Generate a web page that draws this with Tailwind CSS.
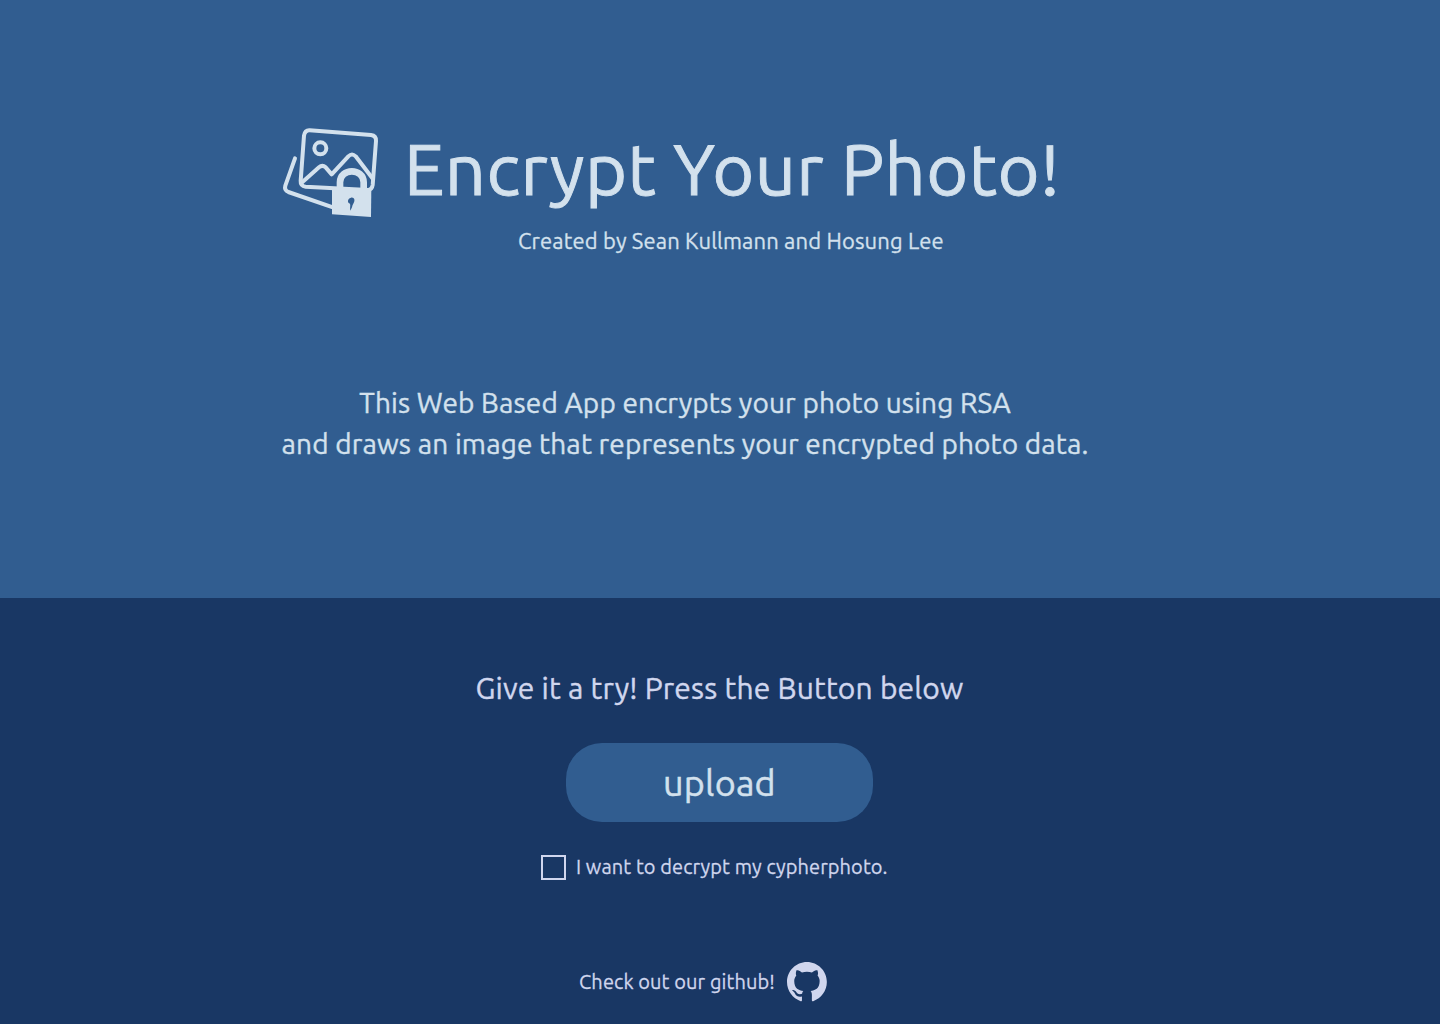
<!DOCTYPE html>
<html lang="en">
<head>
<meta charset="utf-8">
<title>Encrypt Your Photo!</title>
<script src="https://cdn.jsdelivr.net/npm/@tailwindcss/browser@4"></script>
</head>
<body class="font-['Ubuntu','Open_Sans',sans-serif] font-normal bg-[#193764] h-[1024px] overflow-hidden whitespace-nowrap">
<header class="h-[598px] bg-[#315d90] text-[#d3e1ed] pt-[120px]">
  <div class="flex items-start pl-[275px]">
    <svg class="w-[110px] h-[105px] shrink-0" viewBox="0 0 330 315" fill="none" stroke="currentColor" stroke-width="12" stroke-linecap="round" stroke-linejoin="round">
      <path d="M60 115L31 197Q27 211 40 216L176 263"/>
      <path d="M104 31L288 45Q304 47 303 63L293 195Q291 209 279 210L92 200Q76 198 77 183L87 47Q90 30 104 31Z"/>
      <circle cx="136" cy="85" r="18"/>
      <path d="M80 188L132 142Q142 133 152 142L170 163L220 109Q231 98 242 109L294 177"/>
      <path d="M195 210V187C195 143 266 143 266 187V210" stroke-width="20"/>
      <path d="M171 206H289L288 291L171 283Z" fill="currentColor" stroke="none"/>
      <path d="M228 233C235 232 240 237 238 244C236 251 233 252 231 262L226 272C224 263 227 256 225 251C217 249 216 236 228 233Z" fill="#315d90" stroke="none"/>
    </svg>
    <h1 class="ml-[19px] text-[72px] leading-[97px] tracking-[0.0065em] [-webkit-text-stroke:0.013em_currentColor]">Encrypt Your Photo!</h1>
  </div>
  <p class="mt-1 pl-[518px] text-[22px] leading-6 tracking-[0.006em] [-webkit-text-stroke:0.013em_currentColor]">Created by Sean Kullmann and Hosung Lee</p>
  <p class="mt-[129px] w-[1370px] text-center text-[28px] leading-[41px] tracking-[0.005em] [-webkit-text-stroke:0.013em_currentColor]">This Web Based App encrypts your photo using RSA<br>and draws an image that represents your encrypted photo data.</p>
</header>
<main class="flex flex-col items-center w-[1439px] pt-[70px] text-[#d0d6ee]">
  <p class="text-[30px] leading-10 tracking-[0.0055em] [-webkit-text-stroke:0.013em_currentColor]">Give it a try! Press the Button below</p>
  <button class="mt-[35px] w-[307px] h-[79px] rounded-[36px] bg-[#315d90] text-[#d3e1ed] text-[36px] leading-[79px] tracking-[0.005em] [-webkit-text-stroke:0.013em_currentColor]">upload</button>
  <label class="mt-[33px] self-start ml-[541px] flex gap-[10px]">
    <span class="size-[25px] border-2 border-current"></span>
    <span class="text-[20px] leading-[23px] tracking-[0.004em] [-webkit-text-stroke:0.013em_currentColor]">I want to decrypt my cypherphoto.</span>
  </label>
  <div class="mt-[82px] self-start ml-[579px] flex items-start">
    <span class="w-[208px] text-[20px] leading-[39px] tracking-[0.005em] [-webkit-text-stroke:0.013em_currentColor]">Check out our github!</span>
    <svg class="w-10 h-10" viewBox="0 0 98 98" fill="currentColor"><path d="M48.854 0C21.839 0 0 22 0 49.217c0 21.756 13.993 40.172 33.405 46.69 2.427.49 3.316-1.059 3.316-2.362 0-1.141-.08-5.052-.08-9.127-13.59 2.934-16.42-5.867-16.42-5.867-2.184-5.704-5.42-7.17-5.42-7.17-4.448-3.015.324-3.015.324-3.015 4.934.326 7.523 5.052 7.523 5.052 4.367 7.496 11.404 5.378 14.235 4.074.404-3.178 1.699-5.378 3.074-6.6-10.839-1.141-22.243-5.378-22.243-24.283 0-5.378 1.94-9.778 5.014-13.2-.485-1.222-2.184-6.275.486-13.038 0 0 4.125-1.304 13.426 5.052a46.97 46.97 0 0 1 12.214-1.63c4.125 0 8.33.571 12.213 1.63 9.302-6.356 13.427-5.052 13.427-5.052 2.67 6.763.97 11.816.485 13.038 3.155 3.422 5.015 7.822 5.015 13.2 0 18.905-11.404 23.06-22.324 24.283 1.78 1.548 3.316 4.481 3.316 9.126 0 6.6-.08 11.897-.08 13.526 0 1.304.89 2.853 3.316 2.364 19.412-6.52 33.405-24.935 33.405-46.691C97.707 22 75.788 0 48.854 0z"/></svg>
  </div>
</main>
</body>
</html>
